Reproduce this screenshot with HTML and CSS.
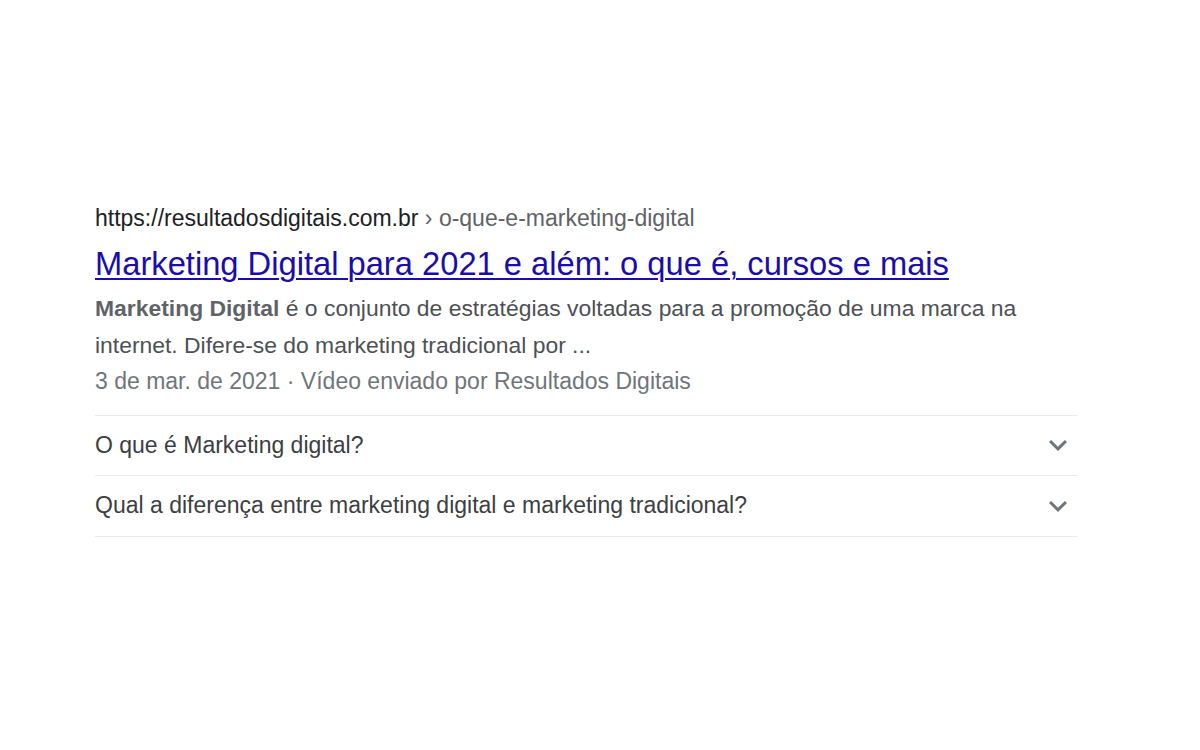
FILE: index.html
```html
<!DOCTYPE html>
<html lang="pt-BR">
<head>
<meta charset="utf-8">
<title>Resultado</title>
<link rel="stylesheet" href="styles.css">
</head>
<body>
<div class="result">
  <div class="url"><span class="domain">https://resultadosdigitais.com.br</span><span class="path"> › o-que-e-marketing-digital</span></div>
  <a class="title" href="#">Marketing Digital para 2021 e além: o que é, cursos e mais</a>
  <div class="snippet"><b>Marketing Digital</b> é o conjunto de estratégias voltadas para a promoção de uma marca na internet. Difere-se do marketing tradicional por ...</div>
  <div class="meta">3 de mar. de 2021 · Vídeo enviado por Resultados Digitais</div>
  <div class="faq">
    <div class="faq-row"><span>O que é Marketing digital?</span><svg class="chev" viewBox="0 0 24 24" width="36" height="36"><path d="M7.41 8.59 12 13.17l4.59-4.58L18 10l-6 6-6-6z"/></svg></div>
    <div class="faq-row"><span>Qual a diferença entre marketing digital e marketing tradicional?</span><svg class="chev" viewBox="0 0 24 24" width="36" height="36"><path d="M7.41 8.59 12 13.17l4.59-4.58L18 10l-6 6-6-6z"/></svg></div>
  </div>
</div>
</body>
</html>
```

FILE: styles.css
```css
html, body { margin: 0; padding: 0; background: #fff; }
body { font-family: "Liberation Sans", Arial, sans-serif; }
.result { width: 983px; margin-left: 95px; padding-top: 205px; }
.url { font-size: 23px; line-height: 26px; color: #202124; white-space: nowrap; }
.url .path { color: #5f6368; }
.title { display: block; font-size: 32.7px; line-height: 42px; color: #1a0dab; text-decoration: underline; text-decoration-thickness: 2px; text-underline-offset: 3px; margin-top: 12px; }
.snippet { font-size: 22.9px; line-height: 36.5px; color: #4d5156; margin-top: 5px; }
.snippet b { font-weight: bold; color: #5f6368; }
.meta { font-size: 23px; line-height: 36.5px; color: #70757a; }
.faq { margin-top: 15px; border-top: 1px solid #ebebeb; }
.faq-row { display: flex; align-items: center; justify-content: space-between; height: 59.5px; border-bottom: 1px solid #ebebeb; font-size: 23px; color: #3c4043; }
.chev { fill: #70757a; margin-right: 2px; }
```
